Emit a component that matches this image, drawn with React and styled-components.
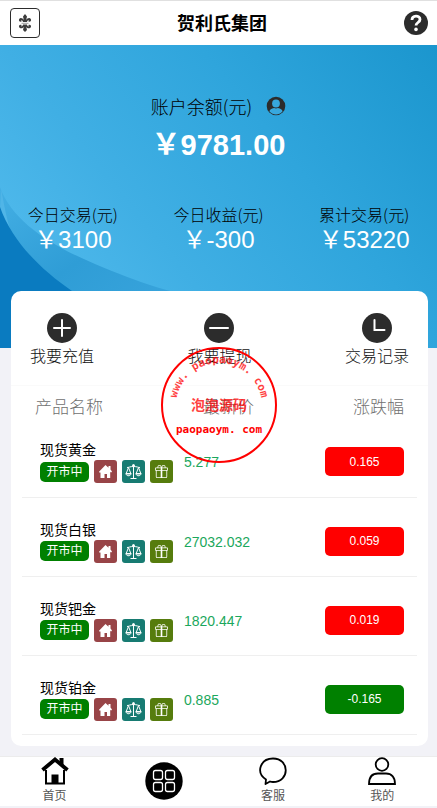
import React from "react";
import styled, { createGlobalStyle } from "styled-components";
import { BsGift } from "react-icons/bs";

const GlobalStyle = createGlobalStyle`
  * { box-sizing: border-box; }
  body {
    margin: 0;
    background: #f2f2f7;
    color: #000;
    font-family: "Liberation Sans", Arial, "Noto Sans CJK SC", sans-serif;
    font-size: 16px;
  }
  button { font-family: inherit; border: 0; padding: 0; background: none; cursor: pointer; }
  svg { display: block; }
`;

const Page = styled.div`
  position: relative;
  display: flex;
  flex-direction: column;
`;

const TopBar = styled.header`
  display: flex;
  align-items: center;
  justify-content: space-between;
  height: 45px;
  padding: 0 9px 0 10px;
  border-top: 1px solid #e0e0e0;
  background: #fff;
`;

const Title = styled.h1`
  margin: 0;
  padding-top: 2px;
  font-size: 18px;
  line-height: 24px;
  font-weight: 700;
`;

const EmblemButton = styled.button`
  display: grid;
  place-items: center;
  width: 30px;
  height: 30px;
  border: 1px solid #2c2c2c;
  border-radius: 4px;
  color: #3c3c3c;
`;

const IconButton = styled.button`
  display: block;
  color: #2c2c2c;
`;

const Hero = styled.section`
  position: relative;
  height: 303px;
  padding-top: 48px;
  background: linear-gradient(51deg, #4cb7ea 18%, #40afe4 36%, #2fa5dc 65%, #1b96ce 100%);
`;

const Waves = styled.svg`
  position: absolute;
  inset: 0;
  width: 100%;
  height: 100%;
`;

const HeroContent = styled.div`
  position: relative;
  display: flex;
  flex-direction: column;
`;

const BalanceLabel = styled.div`
  display: flex;
  align-items: center;
  justify-content: center;
  gap: 14px;
  font-family: "Noto Sans CJK SC", sans-serif;
  font-size: 18px;
  line-height: 26px;
  font-weight: 300;
`;

const Balance = styled.div`
  margin-top: 8px;
  color: #fff;
  font-size: 29px;
  line-height: 36px;
  font-weight: 700;
  text-align: center;
`;

const Stats = styled.dl`
  display: grid;
  grid-template-columns: repeat(3, 1fr);
  margin: 39px 0 0;
  text-align: center;
`;

const StatLabel = styled.dt`
  font-family: "Noto Sans CJK SC", sans-serif;
  font-size: 16px;
  line-height: 24px;
  font-weight: 300;
`;

const StatValue = styled.dd`
  margin: 0;
  color: #fff;
  font-size: 24px;
  line-height: 28px;
`;

const Card = styled.main`
  position: relative;
  margin: -57px 9px 0 11px;
  padding-bottom: 11px;
  border-radius: 10px;
  background: #fff;
`;

const Actions = styled.div`
  display: flex;
  justify-content: space-between;
  padding: 22px 19px 16px;
  border-bottom: 1px solid #fafafa;
`;

const Action = styled.button`
  display: flex;
  flex-direction: column;
  align-items: center;
  gap: 2px;
  color: #111;
  font-size: 16px;
  line-height: 24px;
  font-weight: 300;
`;

const Quotes = styled.table`
  width: calc(100% - 22px);
  margin: 0 11px;
  table-layout: fixed;
  border-collapse: collapse;
`;

const HeadCell = styled.th`
  width: ${(p) => p.$width};
  height: 32px;
  padding: ${(p) => p.$pad};
  color: #707070;
  font-size: 17px;
  line-height: 20px;
  font-weight: 300;
  text-align: ${(p) => p.$align || "left"};
  vertical-align: bottom;
`;

const Row = styled.tr`
  height: 79px;
  border-bottom: 1px solid #efefef;
`;

const Cell = styled.td`
  padding: ${(p) => p.$pad || "0"};
  text-align: ${(p) => p.$align || "left"};
  vertical-align: top;
`;

const ProductName = styled.div`
  font-size: 14px;
  line-height: 19px;
`;

const Tags = styled.div`
  display: flex;
  align-items: center;
  gap: 5px;
`;

const MarketState = styled.span`
  flex: none;
  width: 49px;
  border-radius: 5px;
  background: #008000;
  color: #fff;
  font-size: 12px;
  line-height: 20px;
  text-align: center;
`;

const Tag = styled.span`
  display: grid;
  place-items: center;
  flex: none;
  width: 23px;
  height: 23px;
  border-radius: 3px;
  background: ${(p) => p.$color};
  color: #fff;
`;

const Price = styled.span`
  color: #1ba75c;
  font-size: 14px;
  line-height: 20px;
`;

const Change = styled.button`
  width: 79px;
  height: 29px;
  border-radius: 5px;
  background: ${(p) => (p.$down ? "#008000" : "#ff0000")};
  color: #fff;
  font-size: 12px;
  line-height: 16px;
`;

const Stamp = styled.svg`
  position: absolute;
  top: 346px;
  left: 50%;
  transform: translateX(-50%);
  pointer-events: none;
`;

const TabBar = styled.nav`
  display: grid;
  grid-template-columns: repeat(4, 1fr);
  height: 50px;
  margin-top: 10px;
  border-top: 1px solid #ececec;
  background: #fff;
`;

const Tab = styled.a`
  display: flex;
  flex-direction: column;
  align-items: center;
  justify-content: center;
  gap: 2px;
  color: #555;
  font-size: 12px;
  line-height: 18px;
  text-decoration: none;
  svg { color: #000; }
`;

const Emblem = () => (
  <svg width="14" height="20" viewBox="0 0 14 20" fill="currentColor" aria-hidden="true">
    <path d="M7 1 9 3.500 8.200 7c1-2 3.500-3 4.600-1 1 2-1 3.500-2.600 2.300l1-1.100c-1.600-.2-2 .8-2.200 1.800H5c-.2-1-.6-2-2.200-1.800l1 1.100C2.200 9.500.2 8 1.200 6c1.100-2 3.600-1 4.600 1L5 3.500Z" />
    <path d="M3.500 9.800h7v1h-7Z" opacity=".5" />
    <path d="M5 11.500h4c.2 1 .6 2 2.200 1.800l-1-1.100c1.600-1.200 3.600.3 2.600 2-1.100 2-3.600 1-4.600-.5L9 17l-2 2-2-2 .8-3.300c-1 1.500-3.500 2.500-4.600.5-1-1.700 1-3.200 2.600-2l-1 1.100c1.600.2 2-.8 2.200-1.800Z" />
  </svg>
);

const Help = () => (
  <svg width="24" height="24" viewBox="0 0 24 24" aria-hidden="true">
    <circle cx="12" cy="12" r="12" fill="currentColor" />
    <path d="M8 9c0-5 8-5 8-.5 0 3-4 3-4 6" fill="none" stroke="#fff" strokeWidth="2.8" />
    <circle cx="12" cy="18.4" r="1.8" fill="#fff" />
  </svg>
);

const Person = () => (
  <svg width="20" height="20" viewBox="0 0 20 20" aria-hidden="true">
    <circle cx="10" cy="10" r="9.3" fill="#2c2c2c" />
    <circle cx="10" cy="7.5" r="3.9" fill="#37a8de" />
    <path d="M3.5 15.5c0-2 2-3 4.500-3.500 1.500.5 2.500.5 4 0 2.500.5 4.500 1.500 4.500 3.500-3.500 4-9.500 4-13 0Z" fill="#37a8de" />
  </svg>
);

const Disc = ({ d }) => (
  <svg width="30" height="30" viewBox="0 0 30 30" aria-hidden="true">
    <circle cx="15" cy="15" r="15" fill="#2c2c2c" />
    <path d={d} fill="none" stroke="#fff" strokeWidth="2" strokeLinecap="round" />
  </svg>
);

const SmallHouse = () => (
  <svg width="15" height="15" viewBox="0 0 15 15" fill="currentColor" aria-hidden="true">
    <path d="M7.500 1 10.500 3.700V2h2v3.500L14 7.500l-.8 1-1-.6V14H9v-4H6.500v4h-4V8.400l-.8.4-.7-1Z" />
  </svg>
);

const Scales = () => (
  <svg width="17" height="17" viewBox="0 0 17 17" fill="none" stroke="currentColor" aria-hidden="true">
    <path d="M8.500 2v13M5.500 15.500h6M2 4.500c2 0 3-1 6.500-1s4.500 1 6.500 1M3.500 4.500 1 11M3.500 4.500 6 11M13.500 4.500 11 11M13.500 4.500 16 11" />
    <path d="M1 10.500h5c0 3-5 3-5 0ZM11 10.500h5c0 3-5 3-5 0Z" fill="currentColor" fillOpacity=".5" />
    <circle cx="8.500" cy="2.500" r="1" fill="currentColor" />
  </svg>
);

const HouseIcon = () => (
  <svg width="28" height="28" viewBox="0 0 28 28" aria-hidden="true">
    <path d="M5 13v13.500h18V13" fill="none" stroke="currentColor" strokeWidth="2" />
    <path d="M1.500 13 14 2.500 26.500 13" fill="none" stroke="currentColor" strokeWidth="3.800" />
    <path d="M18.500 1h4v8l-4-3.500ZM10.500 17.500h7V27h-7Z" fill="currentColor" />
  </svg>
);

const GridIcon = () => (
  <svg width="38" height="38" viewBox="0 0 38 38" aria-hidden="true">
    <circle cx="19" cy="19" r="18.700" fill="currentColor" />
    <g fill="none" stroke="#fff" strokeWidth="1.300">
      <rect x="8.500" y="8.500" width="9" height="9" rx="2" />
      <rect x="20.500" y="8.500" width="9" height="9" rx="2" />
      <rect x="8.500" y="20.500" width="9" height="9" rx="2" />
      <rect x="20.500" y="20.500" width="9" height="9" rx="2" />
    </g>
  </svg>
);

const ChatIcon = () => (
  <svg width="28" height="28" viewBox="0 0 28 28" fill="none" stroke="currentColor" strokeWidth="1.800" aria-hidden="true">
    <path d="M7 22.500C-4 15 2 1.500 14 1.500c17 0 17 23.500 0 23.500-1.500 0-2-.2-3-.5L6.500 27Z" strokeLinejoin="round" />
  </svg>
);

const UserIcon = () => (
  <svg width="28" height="28" viewBox="0 0 28 28" fill="none" stroke="currentColor" strokeWidth="1.800" aria-hidden="true">
    <circle cx="14" cy="7.500" r="6.300" />
    <path d="M1 27c0-7 3.500-10.500 9-10.500h8c5.500 0 9 3.500 9 10.500Z" />
  </svg>
);

const stats = [
  ["今日交易(元)", "￥3100"],
  ["今日收益(元)", "￥-300"],
  ["累计交易(元)", "￥53220"],
];

const actions = [
  ["我要充值", "M15 7v16M7 15h16"],
  ["我要提现", "M6 15h18"],
  ["交易记录", "M12.500 7v10H22.500"],
];

const quotes = [
  ["现货黄金", "5.277", "0.165"],
  ["现货白银", "27032.032", "0.059"],
  ["现货钯金", "1820.447", "0.019"],
  ["现货铂金", "0.885", "-0.165"],
];

export default function App() {
  return (
    <>
      <GlobalStyle />
      <Page>
        <TopBar>
          <EmblemButton aria-label="菜单"><Emblem /></EmblemButton>
          <Title>贺利氏集团</Title>
          <IconButton aria-label="帮助"><Help /></IconButton>
        </TopBar>
        <Hero>
          <Waves viewBox="0 0 437 303" preserveAspectRatio="none" aria-hidden="true">
            <defs>
              <linearGradient id="wave" x1="0" y1="0" x2="1" y2="1">
                <stop offset="0" stopColor="#44afe4" />
                <stop offset="0.400" stopColor="#2f9dd6" />
                <stop offset="1" stopColor="#3fa9e0" />
              </linearGradient>
            </defs>
            <path d="M0 142C12 176 50 200 95 219S170 248 230 260V303H0Z" fill="url(#wave)" />
            <path d="M1 144C4 158 6 172 11 187L0 166Z" fill="#50b5e7" />
            <path d="M0 162C12 196 40 224 72 246S110 262 140 275V303H0Z" fill="#0a7bc0" />
          </Waves>
          <HeroContent>
            <BalanceLabel>账户余额(元)<Person /></BalanceLabel>
            <Balance>￥9781.00</Balance>
            <Stats>
              {stats.map(([label, value]) => (
                <div key={label}>
                  <StatLabel>{label}</StatLabel>
                  <StatValue>{value}</StatValue>
                </div>
              ))}
            </Stats>
          </HeroContent>
        </Hero>
        <Card>
          <Actions>
            {actions.map(([label, d]) => (
              <Action key={label}><Disc d={d} />{label}</Action>
            ))}
          </Actions>
          <Quotes>
            <thead>
              <tr>
                <HeadCell $width="41%" $pad="0 0 0 13px">产品名称</HeadCell>
                <HeadCell $width="30%" $pad="0 0 0 19px">最新价</HeadCell>
                <HeadCell $width="29%" $pad="0 13px 0 0" $align="right">涨跌幅</HeadCell>
              </tr>
            </thead>
            <tbody>
              {quotes.map(([name, price, change]) => (
                <Row key={name}>
                  <Cell $pad="23px 0 0 18px">
                    <ProductName>{name}</ProductName>
                    <Tags>
                      <MarketState>开市中</MarketState>
                      <Tag $color="#984447"><SmallHouse /></Tag>
                      <Tag $color="#177b72"><Scales /></Tag>
                      <Tag $color="#567c0d"><BsGift size={13} /></Tag>
                    </Tags>
                  </Cell>
                  <Cell $pad="34px 0 0"><Price>{price}</Price></Cell>
                  <Cell $pad="29px 13px 0 0" $align="right">
                    <Change $down={change.startsWith("-")}>{change}</Change>
                  </Cell>
                </Row>
              ))}
            </tbody>
          </Quotes>
        </Card>
        <TabBar>
          <Tab href="#home"><HouseIcon />首页</Tab>
          <Tab href="#products" aria-label="产品"><GridIcon /></Tab>
          <Tab href="#service"><ChatIcon />客服</Tab>
          <Tab href="#mine"><UserIcon />我的</Tab>
        </TabBar>
        <Stamp width="118" height="118" viewBox="0 0 118 118" fill="#f00">
          <circle cx="59" cy="59" r="57" fill="none" stroke="#f00" strokeWidth="2" />
          <path id="stampArc" d="M16 60A43 43 0 0 1 102 60" fill="none" />
          <g fontFamily="DejaVu Sans Mono, monospace" fontWeight="700" textAnchor="middle">
            <text fontSize="11" opacity=".75">
              <textPath href="#stampArc" startOffset="50%">www. paopaoym. com</textPath>
            </text>
            <text x="59" y="87" fontSize="11">paopaoym. com</text>
          </g>
          <text x="59" y="64" fontSize="14" fontWeight="700" textAnchor="middle" opacity=".75">泡泡源码</text>
        </Stamp>
      </Page>
    </>
  );
}
